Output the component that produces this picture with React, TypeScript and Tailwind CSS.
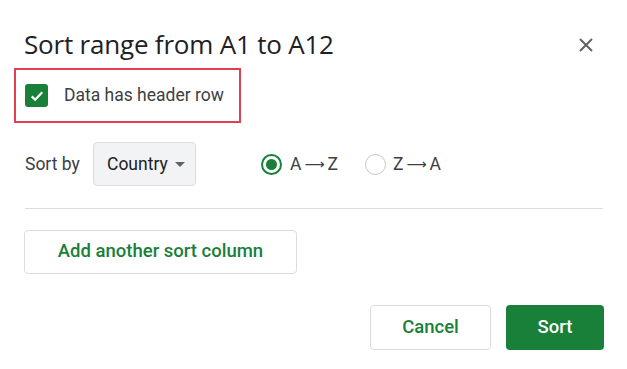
import React from "react";

const Arrow = () => (
  <span className="font-['DejaVu_Sans',sans-serif] mx-[3px] text-[14px]">⟶</span>
);

const App = () => {
  return (
    <div className="w-[627px] h-[369px] bg-white relative font-['Roboto',sans-serif] text-[#3c4043]">
      <div className="flex items-start justify-between pl-[24px] pr-[34px] pt-[28px]">
        <h1 className="text-[26px] leading-[32px] text-[#202124] font-['Open_Sans',sans-serif] tracking-[-0.2px]">
          Sort range from A1 to A12
        </h1>
        <button className="mt-[10px] w-[14px] h-[14px] text-[#5f6368]">
          <svg viewBox="0 0 14 14" width="14" height="14">
            <path d="M1 1L13 13M13 1L1 13" stroke="currentColor" strokeWidth="2" />
          </svg>
        </button>
      </div>

      <div className="ml-[14px] mt-[8px] w-[227px] h-[55px] border-[2.5px] border-[#e0404f] flex items-center pl-[9px]">
        <div className="w-[23px] h-[23px] rounded-[3px] bg-[#188038] flex items-center justify-center">
          <svg viewBox="0 0 24 24" width="18" height="18">
            <path d="M5 12.5l4.5 4.5L19 7" fill="none" stroke="white" strokeWidth="3" />
          </svg>
        </div>
        <span className="ml-[16px] text-[17.5px]">Data has header row</span>
      </div>

      <div className="flex items-center pl-[25px] mt-[19px]">
        <span className="text-[17.5px] w-[68px]">Sort by</span>
        <div className="w-[103px] h-[44px] bg-[#f1f3f4] border border-[#dadce0] rounded-[4px] flex items-center pl-[13px]">
          <span className="text-[17.5px] text-[#202124]">Country</span>
          <svg viewBox="0 0 10 5" width="10" height="5" className="ml-[7px]">
            <path d="M0 0L10 0L5 5Z" fill="#5f6368" />
          </svg>
        </div>
        <div className="flex items-center ml-[65px]">
          <div className="w-[21px] h-[21px] rounded-full border-[2.5px] border-[#188038] flex items-center justify-center">
            <div className="w-[11px] h-[11px] rounded-full bg-[#188038]" />
          </div>
          <span className="ml-[8px] text-[17.5px] flex items-center">
            A<Arrow />Z
          </span>
        </div>
        <div className="flex items-center ml-[27px]">
          <div className="w-[21px] h-[21px] rounded-full border border-[#c4c7c5]" />
          <span className="ml-[7px] text-[17.5px] flex items-center">
            Z<Arrow />A
          </span>
        </div>
      </div>

      <div className="mx-[25px] mt-[22px] w-[578px] h-px bg-[#dadce0]" />

      <button className="ml-[24px] mt-[21px] w-[273px] h-[44px] border border-[#dadce0] rounded-[4px] text-[#188038] text-[18.5px] font-medium">
        Add another sort column
      </button>

      <div className="flex justify-end gap-[15px] pr-[23px] mt-[31px]">
        <button className="w-[121px] h-[45px] border border-[#dadce0] rounded-[4px] text-[#188038] text-[18.5px] font-medium">
          Cancel
        </button>
        <button className="w-[98px] h-[45px] bg-[#188038] rounded-[4px] text-white text-[18.5px] font-medium">
          Sort
        </button>
      </div>
    </div>
  );
};

export default App;
